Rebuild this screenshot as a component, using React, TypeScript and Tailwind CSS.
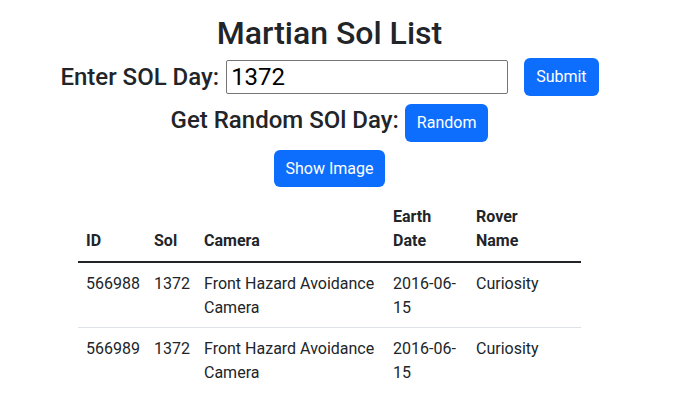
import React from "react";

const photos = [
	{ id: 566988, sol: 1372, camera: "Front Hazard Avoidance Camera", date: "2016-06-15", rover: "Curiosity" },
	{ id: 566989, sol: 1372, camera: "Front Hazard Avoidance Camera", date: "2016-06-15", rover: "Curiosity" },
];

const App = () => {
	return (
		<div className="w-[659px] min-h-[411px] bg-white text-[#212529] font-['Roboto',sans-serif]">
			<h1 className="pt-[14px] mb-[6px] text-center text-[32px] font-medium leading-[1.2]">
				Martian Sol List
			</h1>

			{/* Sol input */}
			<div className="flex items-center justify-center gap-4">
				<h3 className="flex items-baseline gap-[7px] text-[24px] font-medium leading-[1.2]">
					<span>Enter SOL Day:</span>
					<input
						type="text"
						defaultValue="1372"
						className="w-[282px] h-[34px] px-[4px] border border-[#767676] rounded-[2px] text-[24px] font-normal text-black"
					/>
				</h3>
				<button className="h-[38px] px-3 rounded-md bg-[#0d6efd] text-white text-base leading-6">
					Submit
				</button>
			</div>

			{/* Random */}
			<div className="mt-2 flex items-baseline justify-center gap-[6px]">
				<h3 className="text-[24px] font-medium leading-[1.2]">Get Random SOl Day:</h3>
				<button className="h-[38px] px-3 rounded-md bg-[#0d6efd] text-white text-base leading-6">
					Random
				</button>
			</div>

			<div className="mt-2 flex justify-center">
				<button className="h-[37px] px-3 rounded-md bg-[#0d6efd] text-white text-base leading-6">
					Show Image
				</button>
			</div>

			<table className="mt-[10px] mx-auto w-[503px] table-fixed border-collapse text-base leading-6">
				<thead className="border-b-2 border-[#212529]">
					<tr>
						<th className="w-[68px] p-2 text-left align-bottom font-bold">ID</th>
						<th className="w-[50px] p-2 text-left align-bottom font-bold">Sol</th>
						<th className="w-[189px] p-2 text-left align-bottom font-bold">Camera</th>
						<th className="w-[83px] p-2 text-left align-bottom font-bold">Earth Date</th>
						<th className="w-[113px] p-2 text-left align-bottom font-bold">
							Rover
							<br />
							Name
						</th>
					</tr>
				</thead>
				<tbody>
					{photos.map((p, i) => (
						<tr key={p.id} className={i === 0 ? "border-b border-[#dee2e6]" : ""}>
							<td className="px-2 pt-[9px] pb-[7px] align-top">{p.id}</td>
							<td className="px-2 pt-[9px] pb-[7px] align-top">{p.sol}</td>
							<td className="px-2 pt-[9px] pb-[7px] align-top">{p.camera}</td>
							<td className="px-2 pt-[9px] pb-[7px] align-top">{p.date}</td>
							<td className="px-2 pt-[9px] pb-[7px] align-top">{p.rover}</td>
						</tr>
					))}
				</tbody>
			</table>
		</div>
	);
};

export default App;
